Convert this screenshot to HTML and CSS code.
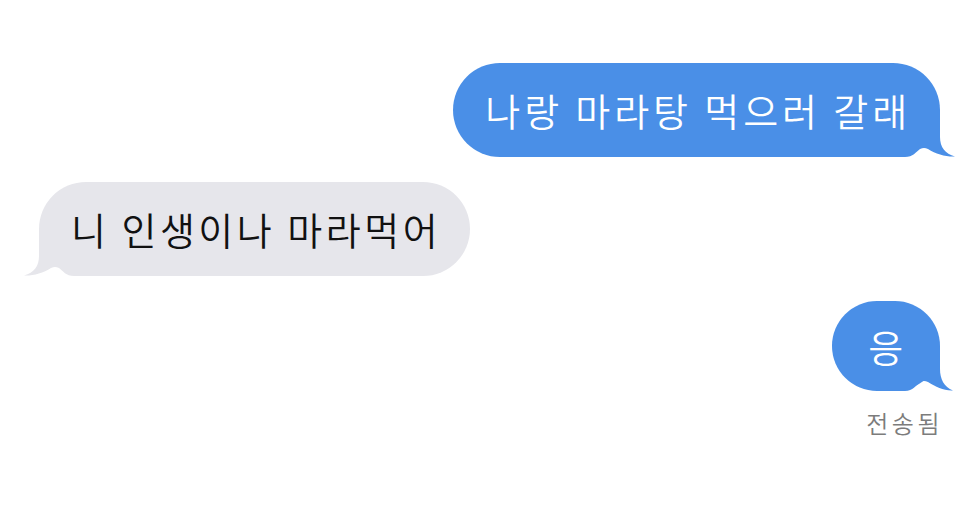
FILE: index.html
```html
<!DOCTYPE html>
<html>
<head>
    <link rel="stylesheet" href="styles.css">
    <title>메시지</title>
</head>
<body>
    <div class="thread">
        <div class="row row-me">
            <div class="bubble bubble-me bubble-first">
                <svg class="tail tail-me" width="62" height="47" viewBox="0 0 62 47"><path d="M0 0 H47 V27 C47 37 52 44 62 46.5 C53 47 43 44 35 39 C32 37.5 30 37.5 27 39 C23 42 20 47 12 47 H0 Z"/></svg>
                <span class="text">나랑 마라탕 먹으러 갈래</span>
            </div>
        </div>
        <div class="row row-them">
            <div class="bubble bubble-them">
                <svg class="tail tail-them" width="62" height="47" viewBox="0 0 62 47"><path d="M62 0 H15 V27 C15 37 10 44 0 46.5 C9 47 19 44 27 39 C30 37.5 32 37.5 35 39 C39 42 42 47 50 47 H62 Z"/></svg>
                <span class="text">니 인생이나 마라먹어</span>
            </div>
        </div>
        <div class="row row-me row-last">
            <div class="bubble bubble-me bubble-short">
                <svg class="tail tail-me" width="62" height="45" viewBox="0 0 62 45"><path d="M0 0 H47 V23 C47 33 51 41 60 44.5 C51 45 43 41 35 36 C32 34.5 30 34.5 27 36 C23 39 20 45 12 45 H0 Z"/></svg>
                <span class="text">응</span>
            </div>
        </div>
        <div class="status">전송됨</div>
    </div>
</body>
</html>
```

FILE: styles.css
```css
body {
    margin: 0;
    background: #fff;
    font-family: "Noto Sans CJK KR", "Noto Sans", sans-serif;
}

.thread {
    display: flex;
    flex-direction: column;
    padding: 63px 40px 0 39px;
}

.row {
    display: flex;
}

.row-me {
    justify-content: flex-end;
}

.row-them {
    justify-content: flex-start;
    margin-top: 25px;
}

.row-last {
    margin-top: 25px;
}

.bubble {
    position: relative;
    height: 94px;
    box-sizing: border-box;
    padding: 0 29px 0 32px;
    border-radius: 47px;
    display: flex;
    align-items: center;
    font-size: 38px;
    font-weight: 350;
    line-height: 1;
    letter-spacing: 3.5px;
}

.text {
    position: relative;
}

.bubble-first {
    padding-left: 32px;
    letter-spacing: 3.9px;
}

.bubble-me {
    background: #4a8fe7;
    color: #fff;
}

.bubble-them {
    background: #e6e6eb;
    color: #111;
}

.bubble-short {
    height: 90px;
    width: 108px;
    justify-content: center;
    padding: 0 0 0 3px;
    border-radius: 45px;
}

.tail {
    position: absolute;
    bottom: 0;
}

.tail-me {
    right: -15px;
    fill: #4a8fe7;
}

.tail-them {
    left: -15px;
    fill: #e6e6eb;
}

.status {
    align-self: flex-end;
    margin-top: 14px;
    margin-right: -3px;
    font-size: 24px;
    font-weight: 350;
    color: #7c7c7c;
    letter-spacing: 3.5px;
}
```
